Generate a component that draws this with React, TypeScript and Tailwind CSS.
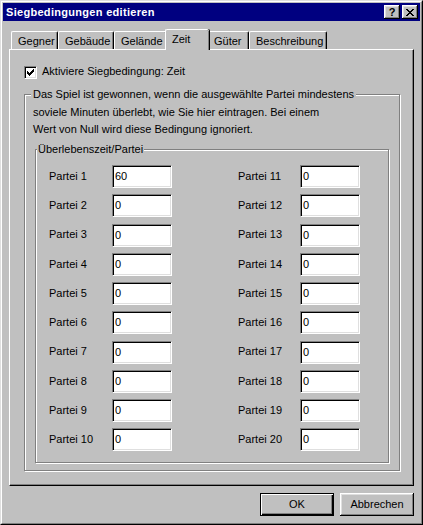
import React from 'react';

const FONT = { fontFamily: '"Liberation Sans", Arial, sans-serif' };

const TABS = ['Gegner', 'Gebäude', 'Gelände', 'Zeit', 'Güter', 'Beschreibung'];
const TAB_WIDTHS: Record<string, string> = {
  Gegner: 'w-[47px]',
  Gebäude: 'w-[56px]',
  Gelände: 'w-[53px]',
  Zeit: 'w-[44px]',
  Güter: 'w-[42px]',
  Beschreibung: 'w-[78px]',
};

const LEFT = ['60', '0', '0', '0', '0', '0', '0', '0', '0', '0'];
const RIGHT = ['0', '0', '0', '0', '0', '0', '0', '0', '0', '0'];

const CHECK = [
  '......X',
  '.....XX',
  'X...XXX',
  'XX.XXX.',
  'XXXXX..',
  '.XXX...',
  '..X....',
];

const CLOSE = [
  'XX....XX',
  '.XX..XX.',
  '..XXXX..',
  '...XX...',
  '..XXXX..',
  '.XX..XX.',
  'XX....XX',
];

function PixelGlyph({ rows }: { rows: string[] }) {
  const w = rows[0].length;
  const h = rows.length;
  return (
    <svg width={w} height={h} viewBox={`0 0 ${w} ${h}`} shapeRendering="crispEdges">
      {rows.flatMap((row, y) =>
        row.split('').map((c, x) =>
          c === 'X' ? <rect key={`${x}-${y}`} x={x} y={y} width={1} height={1} fill="#000" /> : null
        )
      )}
    </svg>
  );
}

function CaptionButton({ children }: { children: React.ReactNode }) {
  return (
    <div className="w-[16px] h-[14px] bg-[#c0c0c0] flex items-center justify-center shadow-[inset_-1px_-1px_0_#000,inset_1px_1px_0_#fff,inset_-2px_-2px_0_#808080,inset_2px_2px_0_#dfdfdf]">
      {children}
    </div>
  );
}

function Tab({ label, active }: { label: string; active?: boolean }) {
  if (active) {
    return (
      <div
        className={`relative z-10 -mx-[2px] -mb-px h-[21px] ${TAB_WIDTHS[label]} bg-[#c0c0c0] border-l border-t border-white rounded-t-[2px] pl-[6px] pt-[3px] leading-[13px] shadow-[inset_-1px_0_0_#808080,1px_0_0_#000]`}
      >
        {label}
      </div>
    );
  }
  return (
    <div
      className={`h-[18px] ${TAB_WIDTHS[label]} bg-[#c0c0c0] border-l border-t border-white border-r border-r-black rounded-t-[2px] pl-[6px] pt-[3px] leading-[13px] shadow-[inset_-1px_0_0_#808080]`}
    >
      {label}
    </div>
  );
}

function Field({ value }: { value: string }) {
  return (
    <input
      readOnly
      value={value}
      className="w-[60px] h-[23px] bg-white border border-t-[#808080] border-l-[#808080] border-r-white border-b-white shadow-[inset_1px_1px_0_#000,inset_-1px_-1px_0_#dfdfdf] pl-[2px] pb-[1px] text-[11px] text-black outline-none"
    />
  );
}

function Column({ start, values, labelWidth }: { start: number; values: string[]; labelWidth: string }) {
  return (
    <div className="flex flex-col gap-[6.25px]">
      {values.map((v, i) => (
        <div key={i} className="flex items-center h-[23px]">
          <span className={`${labelWidth} pb-[1px]`}>Partei {start + i}</span>
          <Field value={v} />
        </div>
      ))}
    </div>
  );
}

export default function App() {
  return (
    <div
      className="w-[423px] h-[525px] bg-[#c0c0c0] border border-t-[#dfdfdf] border-l-[#dfdfdf] border-r-black border-b-black text-[11px] text-black"
      style={FONT}
    >
      <div className="h-full flex flex-col border border-t-white border-l-white border-r-[#808080] border-b-[#808080] p-px">
        {/* title bar */}
        <div className="h-[18px] bg-[#000080] flex items-center pl-[3px] pr-[2px]">
          <span className="flex-1 text-white font-bold tracking-[0.3px] leading-[13px]">
            Siegbedingungen editieren
          </span>
          <div className="flex gap-[2px]">
            <CaptionButton>
              <span className="font-bold text-[11px] leading-[11px] pt-px">?</span>
            </CaptionButton>
            <CaptionButton>
              <PixelGlyph rows={CLOSE} />
            </CaptionButton>
          </div>
        </div>

        <div className="px-[6px]">
          {/* tabs */}
          <div className="mt-[8px] h-[20px] flex items-end pl-[2px]">
            {TABS.map(t => (
              <Tab key={t} label={t} active={t === 'Zeit'} />
            ))}
          </div>

          {/* tab page */}
          <div className="w-[405px] h-[437px] border-l border-t border-white border-r border-b border-r-black border-b-black shadow-[inset_-1px_-1px_0_#808080] pl-[14px] pt-[16px]">
            <div className="flex items-center h-[13px] gap-[5px]">
              <div className="w-[13px] h-[13px] bg-white border border-t-[#808080] border-l-[#808080] border-r-white border-b-white shadow-[inset_1px_1px_0_#000,inset_-1px_-1px_0_#dfdfdf] flex items-center justify-center">
                <PixelGlyph rows={CHECK} />
              </div>
              <span className="pb-[2px]">Aktiviere Siegbedingung: Zeit</span>
            </div>

            <div className="relative mt-[15px] w-[376px] h-[377px] border border-[#808080] shadow-[inset_1px_1px_0_#fff,1px_1px_0_#fff] pt-[54px] px-[10px]">
              <span className="absolute left-[6px] top-[-9px] bg-[#c0c0c0] px-[2px] leading-[17.5px]">
                Das Spiel ist gewonnen, wenn die ausgewählte Partei mindestens
                <br />
                soviele Minuten überlebt, wie Sie hier eintragen. Bei einem
                <br />
                Wert von Null wird diese Bedingung ignoriert.
              </span>

              <div className="relative w-[354px] h-[314px] border border-[#808080] shadow-[inset_1px_1px_0_#fff,1px_1px_0_#fff] pl-[13px] pt-[15px]">
                <span className="absolute left-[1px] top-[-7px] bg-[#c0c0c0] px-px leading-[13px]">
                  Überlebenszeit/Partei
                </span>
                <div className="flex gap-[66px]">
                  <Column start={1} values={LEFT} labelWidth="w-[63px]" />
                  <Column start={11} values={RIGHT} labelWidth="w-[62px]" />
                </div>
              </div>
            </div>
          </div>

          {/* buttons */}
          <div className="mt-[7px] flex justify-end gap-[6px]">
            <button className="w-[74px] h-[23px] border border-black bg-[#c0c0c0] shadow-[inset_1px_1px_0_#fff,inset_-1px_-1px_0_#000,inset_-2px_-2px_0_#808080] flex items-center justify-center pb-px">
              OK
            </button>
            <button className="w-[74px] h-[23px] bg-[#c0c0c0] shadow-[inset_-1px_-1px_0_#000,inset_1px_1px_0_#fff,inset_-2px_-2px_0_#808080,inset_2px_2px_0_#dfdfdf] flex items-center justify-center pb-px">
              Abbrechen
            </button>
          </div>
        </div>
      </div>
    </div>
  );
}
